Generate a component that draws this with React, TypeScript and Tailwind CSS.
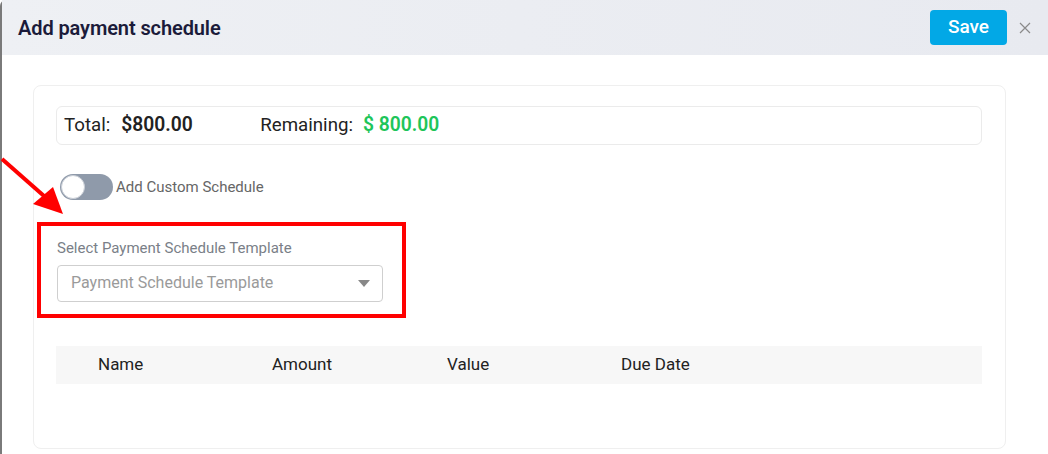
import React from "react";

export default function App() {
  return (
    <div
      className="relative w-[1048px] h-[454px] overflow-hidden bg-white"
      style={{ fontFamily: "Roboto, 'Liberation Sans', sans-serif" }}
    >
      <div className="flex flex-col h-full border-l-2 border-[#7a7a7a] rounded-tl-[6px]">
        <div className="flex items-center h-[55px] pl-[16px] pr-[17px] bg-gradient-to-r from-[#eef0f4] to-[#e8eaf0]">
          <div className="text-[20px] font-semibold text-[#1b1b3a] tracking-[-0.1px]">Add payment schedule</div>
          <div className="ml-auto flex items-center">
            <button className="w-[77px] h-[35px] rounded-[4px] bg-[#02a8e6] text-white text-[19px] font-medium">Save</button>
            <svg className="ml-[12px]" width="12" height="12" viewBox="0 0 12 12">
              <path d="M1 1L11 11M11 1L1 11" stroke="#8a8a8a" strokeWidth="1.2" />
            </svg>
          </div>
        </div>
        <div className="flex-1 pt-[30px] pl-[31px] pr-[42px]">
          <div className="h-[364px] border border-[#efefef] rounded-[8px] pt-[20px] pl-[22px] pr-[23px]">
            <div className="flex items-center h-[39px] border border-[#ebebeb] rounded-[6px] pl-[7px]">
              <span className="text-[18.7px] text-[#222]">Total:</span>
              <span className="ml-[11px] text-[19.3px] font-semibold text-[#222] w-[139px]">$800.00</span>
              <span className="text-[18.7px] text-[#222]">Remaining:</span>
              <span className="ml-[10px] text-[19.3px] font-semibold text-[#1ec55a]">$ 800.00</span>
            </div>
            <div className="flex items-center mt-[29px] ml-[4px]">
              <div className="relative w-[53px] h-[26px] rounded-full bg-[#8f9aaa]">
                <div className="absolute left-[1px] top-[1px] w-[24px] h-[24px] rounded-full bg-white border border-[#c9ced6]" />
              </div>
              <span className="ml-[3px] text-[15px] text-[#666]">Add Custom Schedule</span>
            </div>
            <div className="mt-[22px] -ml-[19px] w-[369px] h-[96px] border-[4px] border-[#ff0000] pt-[11px] pl-[16px]">
              <div className="text-[15px] text-[#7a7f88]">Select Payment Schedule Template</div>
              <div className="mt-[5px] flex items-center w-[326px] h-[37px] border border-[#cfcfcf] rounded-[4px] pl-[13px] pr-[12px]">
                <span className="text-[16px] text-[#9a9a9a]">Payment Schedule Template</span>
                <svg className="ml-auto" width="12" height="7" viewBox="0 0 12 7">
                  <path d="M0 0H12L6 7Z" fill="#888" />
                </svg>
              </div>
            </div>
            <div className="mt-[28px] flex items-center h-[38px] bg-[#f7f7f7] pl-[42px] text-[17px] text-[#222]">
              <div className="w-[174px]">Name</div>
              <div className="w-[175px]">Amount</div>
              <div className="w-[174px]">Value</div>
              <div>Due Date</div>
            </div>
          </div>
        </div>
      </div>
      <svg className="absolute left-0 top-[155px]" width="70" height="65" viewBox="0 0 70 65">
        <path d="M2 4L44 41" stroke="#ff0000" strokeWidth="4" />
        <path d="M33 49L53 32L63 59Z" fill="#ff0000" />
      </svg>
    </div>
  );
}
